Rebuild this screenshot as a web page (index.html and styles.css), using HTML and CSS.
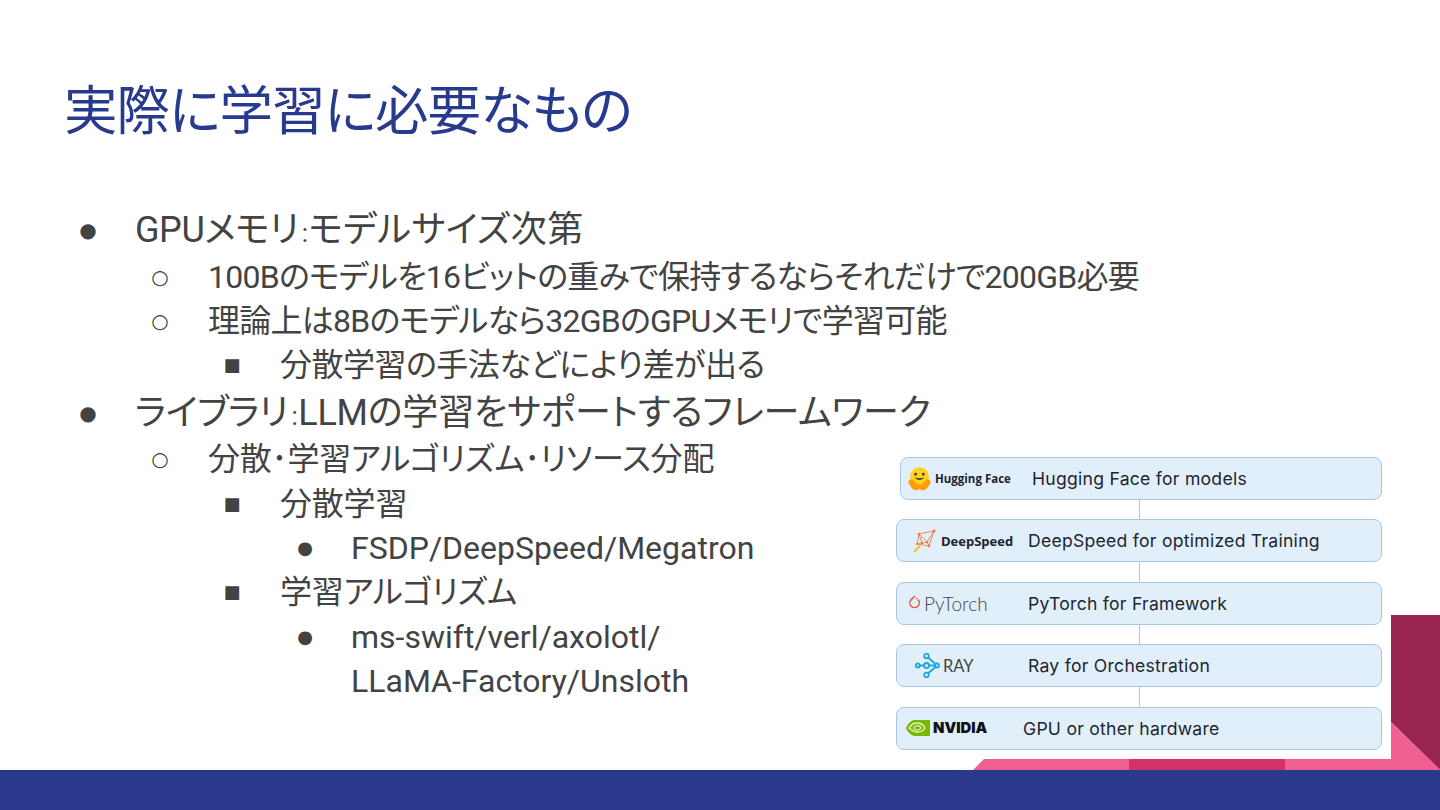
FILE: index.html
```html
<!DOCTYPE html>
<html lang="ja">
<head>
<meta charset="utf-8">
<title>実際に学習に必要なもの</title>
<link rel="stylesheet" href="styles.css">
</head>
<body>
<div class="slide">
  <svg class="deco" viewBox="0 0 1440 810" width="1440" height="810" aria-hidden="true">
    <polygon points="1391,615 1440,615 1440,770 1391,722" fill="#99244f"/>
    <polygon points="1391,722 1440,770 1391,770" fill="#ef5f8f"/>
    <polygon points="984,759 1391,759 1391,770 973,770" fill="#ef5f8f"/>
    <rect x="1129" y="759" width="156" height="11" fill="#d13366"/>
  </svg>
  <main class="content">
    <h1 class="title">実際に学習に必要なもの</h1>
    <ul class="list l1">
      <li><span class="tight-a">GPUメモリ</span><span class="colon"> : </span><span class="tight-e">モデルサイズ次第</span>
        <ul class="list l2">
          <li><span class="tight-b">100Bのモデルを16ビットの重みで保持するならそれだけで200GB必要</span></li>
          <li><span class="tight-b">理論上は8Bのモデルなら32GBのGPUメモリで学習可能</span>
            <ul class="list l3">
              <li><span class="tight-c">分散学習の手法などにより差が出る</span></li>
            </ul>
          </li>
        </ul>
      </li>
      <li><span class="tight-a">ライブラリ</span><span class="colon"> : </span><span class="tight-f">LLMの学習をサポートするフレームワーク</span>
        <ul class="list l2">
          <li><span class="tight-d">分散･学習アルゴリズム･リソース分配</span>
            <ul class="list l3">
              <li><span class="tight-d">分散学習</span>
                <ul class="list l4"><li>FSDP/DeepSpeed/Megatron</li></ul>
              </li>
              <li><span class="tight-d">学習アルゴリズム</span>
                <ul class="list l4"><li>ms-swift/verl/axolotl/<br>LLaMA-Factory/Unsloth</li></ul>
              </li>
            </ul>
          </li>
        </ul>
      </li>
    </ul>
  </main>
  <figure class="stack">
    <div class="row first">
      <div class="logo logo-hf">
        <svg width="25" height="25" viewBox="0 0 26 26"><circle cx="13" cy="11" r="9.800" fill="#ffd21e"/><path d="M1.500 16c.5-2 3-3 5-1.500l2.500 3c1.500 1.700 2.500 2.300 4 2.300s2.500-.6 4-2.300l2.500-3c2-1.500 4.500-.5 5 1.500.4 1.500-.5 3-1.500 4.300-1.800 2.700-3.800 5-6.200 5-1.800 0-2.800-.9-3.800-1.500-1 .6-2 1.500-3.800 1.500-2.400 0-4.400-2.300-6.200-5-1-1.300-1.900-2.800-1.500-4.300z" fill="#ff9d0b"/><circle cx="9" cy="8.500" r="1.400" fill="#3a3b45"/><circle cx="17" cy="8.500" r="1.400" fill="#3a3b45"/><path d="M8.500 12c1 3.400 8 3.400 9 0-2.500.9-6.500.9-9 0z" fill="#3a3b45"/></svg>
        <span>Hugging Face</span>
      </div>
      <span class="label">Hugging Face for models</span>
    </div>
    <div class="row">
      <div class="logo logo-ds">
        <svg width="24" height="24" viewBox="0 0 24 24" fill="none"><path d="M6 5 21 2 16 17 4 15 6 5M6 5l8 8 7-11M6 5l3 9 5-1 2 4M4 15l5-1" stroke="#ee8e55" stroke-width="1"/><g fill="#ea7a3d"><circle cx="6" cy="5" r="1.300"/><circle cx="21" cy="2" r="1.500"/><circle cx="16" cy="17" r="1.300"/><circle cx="4" cy="15" r="1.100"/><circle cx="14" cy="13" r="1.200"/><circle cx="9" cy="14" r="1.300"/></g><path d="M1 23 7 17" stroke="#f6c33c" stroke-width="2.400"/></svg>
        <span>DeepSpeed</span>
      </div>
      <span class="label">DeepSpeed for optimized Training</span>
    </div>
    <div class="row">
      <div class="logo logo-pt">
        <svg width="13" height="16" viewBox="0 0 13 16" fill="none"><path d="M6.800 1 3.200 4.600a4.700 4.700 0 1 0 6.700 0" stroke="#e9573f" stroke-width="1.500"/><circle cx="8.600" cy="3.600" r=".8" fill="#e9573f"/></svg>
        <span>PyTorch</span>
      </div>
      <span class="label">PyTorch for Framework</span>
    </div>
    <div class="row">
      <div class="logo logo-ray">
        <svg width="25" height="25" viewBox="0 0 25 25" fill="none" stroke="#1ba7e0" stroke-width="1.800"><circle cx="2.800" cy="12.500" r="2"/><circle cx="11.500" cy="12.500" r="2.500"/><circle cx="22" cy="12.500" r="2"/><circle cx="11.500" cy="3" r="2.300"/><circle cx="11.500" cy="22" r="2.300"/><path d="M4.800 12.500H9M14 12.500h6M13 4.500l7.500 6.500M13 20.500l7.500-6.500"/></svg>
        <span>RAY</span>
      </div>
      <span class="label">Ray for Orchestration</span>
    </div>
    <div class="row">
      <div class="logo logo-nv">
        <svg width="24" height="16" viewBox="0 0 24 16"><path d="M8 0h16v16H8.500C4 15 1 11 0 8c1-3 4-7 8-8z" fill="#76b900"/><path d="M3 8c2-3 5-5 8-5 5 0 7 3 8 5-1 2-3 4-7 4-3 0-6-1-9-4z" fill="none" stroke="#e6f3c8" stroke-width="1.300"/><path d="M7.500 8c1-1.500 2.500-2.400 4-2.400s3 1 3.500 2.400c-.5 1-2 2-3.500 2s-3-.8-4-2z" fill="none" stroke="#e6f3c8" stroke-width="1.100"/></svg>
        <span>NVIDIA</span>
      </div>
      <span class="label">GPU or other hardware</span>
    </div>
  </figure>
  <footer class="band"></footer>
</div>
</body>
</html>
```
FILE: styles.css
```css
* { box-sizing: border-box; }
html, body { margin: 0; padding: 0; background: #fff; }
.slide {
  position: relative;
  width: 1440px;
  height: 810px;
  overflow: hidden;
  display: flex;
  flex-direction: column;
  background: #fff;
  font-family: Roboto, "Noto Sans CJK JP", sans-serif;
  font-feature-settings: "palt";
  color: #434343;
}
.deco { position: absolute; left: 0; top: 0; }
.content { position: relative; flex: 1; padding: 78px 0 0 64px; }
.title {
  margin: 0 0 60px;
  font-size: 53.500px;
  letter-spacing: -1px;
  line-height: 68px;
  font-weight: 400;
  color: #283a8e;
}
.list { list-style: none; margin: 0; padding: 0; }
.list li { position: relative; }
.list li::before { position: absolute; text-align: center; width: 40px; font-family: "DejaVu Sans", sans-serif; }
.tight-a { letter-spacing: -.4px; }
.tight-b { letter-spacing: -.75px; }
.tight-c { letter-spacing: -.5px; }
.tight-d { letter-spacing: -.2px; }
.tight-e { letter-spacing: .45px; }
.tight-f { letter-spacing: -.2px; }
.colon { font-size: 26px; line-height: 0; letter-spacing: -3px; }
.l1 { margin-left: 71px; }
.l1 > li { font-size: 36px; line-height: 48.500px; }
.l1 > li + li { margin-top: 1.500px; }
.l1 > li::before { content: "●"; left: -67px; font-size: 20px; }
.l2 { margin-left: 73px; }
.l2 > li { font-size: 32px; line-height: 44.300px; }
.l2 > li::before { content: "○"; left: -68px; font-size: 20px; }
.l3 { margin-left: 72px; }
.l3 > li::before { content: "■"; left: -68px; font-size: 18px; }
.l4 { margin-left: 71px; }
.l4 > li::before { content: "●"; left: -66px; font-size: 18px; }
.stack {
  position: absolute;
  left: 896px;
  top: 456.500px;
  width: 486px;
  margin: 0;
  display: flex;
  flex-direction: column;
  gap: 19.500px;
}
.row {
  position: relative;
  height: 43px;
  display: flex;
  align-items: center;
  background: #e1effb;
  border: 1.500px solid #a9c6e6;
  border-radius: 8px;
  font-family: Inter, sans-serif;
  color: #1f2430;
}
.row + .row::before {
  content: "";
  position: absolute;
  left: 241.500px;
  top: -21px;
  width: 1.500px;
  height: 20px;
  background: #a9c6e6;
}
.first { margin-left: 4px; }
.logo { display: flex; align-items: center; flex: none; width: 131px; }
.label { font-size: 17.600px; letter-spacing: .25px; }
.logo-hf { padding-left: 6px; gap: 3px; font: 700 11.500px "Open Sans", sans-serif; }
.logo-ds { padding-left: 16px; gap: 4px; font: 700 13px "Open Sans", sans-serif; }
.logo-pt { padding-left: 11px; gap: 3px; font: 300 19px Lato, sans-serif; color: #444; }
.logo-ray { padding-left: 18px; gap: 3px; font: 400 16.500px Lato, sans-serif; color: #444; }
.logo-nv { padding-left: 9px; gap: 3px; width: 126px; font: 900 14.800px Inter, sans-serif; color: #111; }
.band { position: relative; height: 40px; flex: none; background: #2a398c; }
```
